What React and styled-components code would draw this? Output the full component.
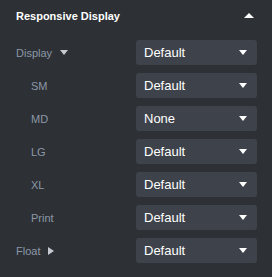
import styled, { createGlobalStyle } from "styled-components";

const GlobalStyle = createGlobalStyle`
  html, body {
    margin: 0;
    padding: 0;
    background: #2d3135;
  }
`;

function App() {
  const breakpoints = [
    ["SM", "Default"],
    ["MD", "None"],
    ["LG", "Default"],
    ["XL", "Default"],
    ["Print", "Default"],
  ];

  return (
    <>
      <GlobalStyle />
      <Panel>
        <Header>
          <Title>Responsive Display</Title>
          <Caret $dir="up" />
        </Header>
        <Rows>
          <Row>
            <Label>
              Display <Caret $dir="down" $muted />
            </Label>
            <Select>
              <span>Default</span>
              <Caret $dir="down" />
            </Select>
          </Row>
          {breakpoints.map(([name, value]) => (
            <Row key={name}>
              <Label $indent>{name}</Label>
              <Select>
                <span>{value}</span>
                <Caret $dir="down" />
              </Select>
            </Row>
          ))}
          <Row>
            <Label>
              Float <Caret $dir="right" $muted />
            </Label>
            <Select>
              <span>Default</span>
              <Caret $dir="down" />
            </Select>
          </Row>
        </Rows>
      </Panel>
    </>
  );
}

export default App;

const Panel = styled.div`
  width: 272px;
  height: 277px;
  box-sizing: border-box;
  background: #2d3135;
  font-family: "Liberation Sans", Arial, sans-serif;
  padding: 0 15px 0 16px;
`;

const Header = styled.div`
  display: flex;
  align-items: center;
  justify-content: space-between;
  height: 31px;
  padding-right: 3px;
`;

const Title = styled.div`
  color: #ffffff;
  font-size: 11px;
  font-weight: bold;
`;

const Rows = styled.div`
  display: flex;
  flex-direction: column;
  gap: 8px;
  margin-top: 9px;
`;

const Row = styled.div`
  display: flex;
  align-items: center;
  justify-content: space-between;
  height: 25px;
`;

const Label = styled.div`
  display: flex;
  align-items: center;
  gap: 8px;
  color: #8c97a8;
  font-size: 11px;
  padding-left: ${(p) => (p.$indent ? "15px" : "0")};
`;

const Select = styled.div`
  width: 121px;
  height: 25px;
  box-sizing: border-box;
  background: #3e424a;
  border-radius: 3px;
  display: flex;
  align-items: center;
  justify-content: space-between;
  padding: 0 10px 0 8px;
  color: #ffffff;
  font-size: 13px;
`;

const Caret = styled.span`
  display: inline-block;
  width: 0;
  height: 0;
  ${(p) =>
    p.$dir === "up"
      ? `border-left: 5px solid transparent;
         border-right: 5px solid transparent;
         border-bottom: 5px solid #ffffff;`
      : p.$dir === "right"
      ? `border-top: 4px solid transparent;
         border-bottom: 4px solid transparent;
         border-left: 6px solid ${p.$muted ? "#c5cad2" : "#ffffff"};`
      : `border-left: 4px solid transparent;
         border-right: 4px solid transparent;
         border-top: 5px solid ${p.$muted ? "#c5cad2" : "#ffffff"};`}
`;
